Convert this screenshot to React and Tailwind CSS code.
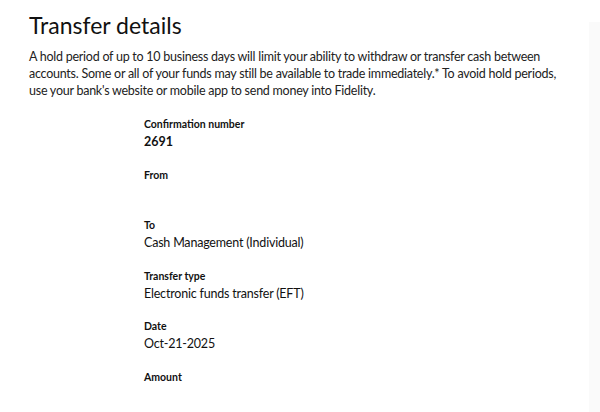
export default function App() {
  const rows = [
    { label: "Confirmation number", value: "2691", bold: true },
    { label: "From", value: "" },
    { label: "To", value: "Cash Management (Individual)" },
    { label: "Transfer type", value: "Electronic funds transfer (EFT)" },
    { label: "Date", value: "Oct-21-2025" },
    { label: "Amount", value: "" },
  ];
  return (
    <div className="relative w-[600px] h-[412px] overflow-hidden bg-white text-[#111]" style={{ fontFamily: "Lato, 'Open Sans', sans-serif" }}>
      <div className="absolute right-0 top-[22px] bottom-0 w-[11px] bg-[#fafafa]" />
      <div className="pl-[29px] pr-[24px] pt-[10px]">
        <h1 className="text-[23px] leading-[30px] font-normal text-[#111]">Transfer details</h1>
        <p className="mt-[8px] text-[12.5px] leading-[17px] tracking-[-0.25px] text-[#222]">
          A hold period of up to 10 business days will limit your ability to withdraw or transfer cash between accounts. Some or all of your funds may still be available to trade immediately.* To avoid hold periods, use your bank's website or mobile app to send money into Fidelity.
        </p>
        <div className="ml-[115px] mt-[18px] flex flex-col">
          {rows.map((r) => (
            <div key={r.label} className="h-[50.6px]">
              <div className="text-[10.5px] leading-[14px] font-bold">{r.label}</div>
              <div className={`mt-[2px] leading-[17px] ${r.bold ? "font-bold text-[12.5px]" : "text-[12.5px] tracking-[-0.2px]"}`}>{r.value}</div>
            </div>
          ))}
        </div>
      </div>
    </div>
  );
}
